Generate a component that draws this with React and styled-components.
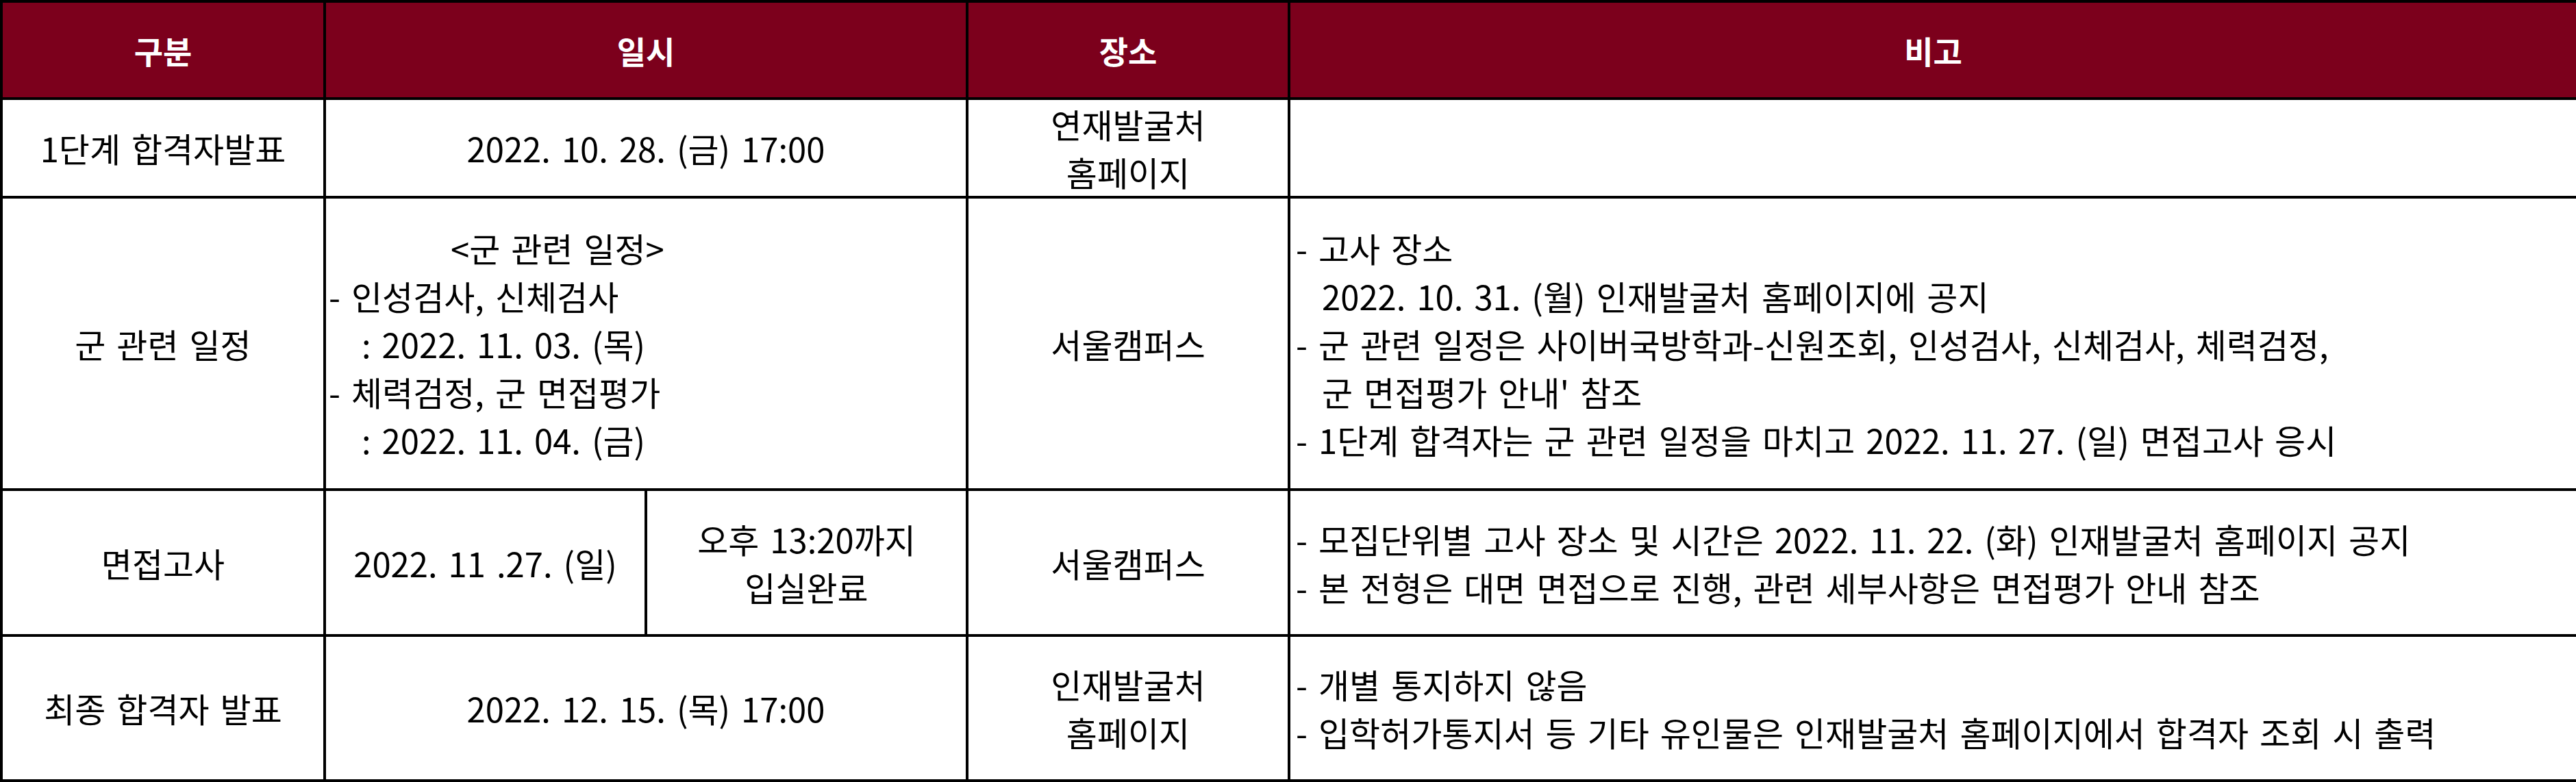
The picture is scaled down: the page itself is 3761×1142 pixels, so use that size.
import React from 'react'
import styled, { createGlobalStyle } from 'styled-components'

const GlobalStyle = createGlobalStyle`
  html, body {
    margin: 0;
    padding: 0;
    background: #ffffff;
  }
  body {
    font-family: "Noto Sans CJK KR", "Noto Sans", sans-serif;
    color: #000;
  }
`

const Table = styled.table`
  width: 3761px;
  table-layout: fixed;
  border-collapse: collapse;
  font-size: 49px;
  word-spacing: 5px;
`

const HeadRow = styled.tr`
  height: 142px;
`

const Row = styled.tr`
  height: ${p => p.$h}px;
`

const HeadCell = styled.th`
  background: #7c001c;
  color: #ffffff;
  font-weight: 700;
  font-size: 46px;
  border: 4px solid #000;
  text-align: center;
  vertical-align: middle;
  padding: 0;
`

const Cell = styled.td`
  border: 4px solid #000;
  border-left-width: ${p => p.$thin ? 3 : 4}px;
  text-align: ${p => p.$left ? 'left' : 'center'};
  vertical-align: middle;
  padding: 0 0 0 ${p => p.$pad || 0}px;
  line-height: 70px;
  white-space: nowrap;
`

const Line = styled.div`
  padding-left: ${p => p.$indent || 0}px;
`

export default function App() {
  return (
    <>
      <GlobalStyle />
      <Table>
        <colgroup>
          <col style={{ width: 472 }} />
          <col style={{ width: 469 }} />
          <col style={{ width: 469 }} />
          <col style={{ width: 470 }} />
          <col style={{ width: 1881 }} />
        </colgroup>
        <tbody>
          <HeadRow>
            <HeadCell>구분</HeadCell>
            <HeadCell colSpan={2}>일시</HeadCell>
            <HeadCell>장소</HeadCell>
            <HeadCell>비고</HeadCell>
          </HeadRow>

          <Row $h={144}>
            <Cell>1단계 합격자발표</Cell>
            <Cell colSpan={2}>2022. 10. 28. (금) 17:00</Cell>
            <Cell>
              <Line>연재발굴처</Line>
              <Line>홈페이지</Line>
            </Cell>
            <Cell $left $pad={8}></Cell>
          </Row>

          <Row $h={427}>
            <Cell>군 관련 일정</Cell>
            <Cell colSpan={2} $left $pad={4}>
              <Line $indent={178}>&lt;군 관련 일정&gt;</Line>
              <Line>- 인성검사, 신체검사</Line>
              <Line $indent={48}>: 2022. 11. 03. (목)</Line>
              <Line>- 체력검정, 군 면접평가</Line>
              <Line $indent={48}>: 2022. 11. 04. (금)</Line>
            </Cell>
            <Cell>서울캠퍼스</Cell>
            <Cell $left $pad={8}>
              <Line>- 고사 장소</Line>
              <Line $indent={38}>2022. 10. 31. (월) 인재발굴처 홈페이지에 공지</Line>
              <Line>- 군 관련 일정은 사이버국방학과-신원조회, 인성검사, 신체검사, 체력검정,</Line>
              <Line $indent={38}>군 면접평가 안내' 참조</Line>
              <Line>- 1단계 합격자는 군 관련 일정을 마치고 2022. 11. 27. (일) 면접고사 응시</Line>
            </Cell>
          </Row>

          <Row $h={213}>
            <Cell>면접고사</Cell>
            <Cell>2022. 11 .27. (일)</Cell>
            <Cell $thin>
              <Line>오후 13:20까지</Line>
              <Line>입실완료</Line>
            </Cell>
            <Cell>서울캠퍼스</Cell>
            <Cell $left $pad={8}>
              <Line>- 모집단위별 고사 장소 및 시간은 2022. 11. 22. (화) 인재발굴처 홈페이지 공지</Line>
              <Line>- 본 전형은 대면 면접으로 진행, 관련 세부사항은 면접평가 안내 참조</Line>
            </Cell>
          </Row>

          <Row $h={212}>
            <Cell>최종 합격자 발표</Cell>
            <Cell colSpan={2}>2022. 12. 15. (목) 17:00</Cell>
            <Cell>
              <Line>인재발굴처</Line>
              <Line>홈페이지</Line>
            </Cell>
            <Cell $left $pad={8}>
              <Line>- 개별 통지하지 않음</Line>
              <Line>- 입학허가통지서 등 기타 유인물은 인재발굴처 홈페이지에서 합격자 조회 시 출력</Line>
            </Cell>
          </Row>
        </tbody>
      </Table>
    </>
  )
}
